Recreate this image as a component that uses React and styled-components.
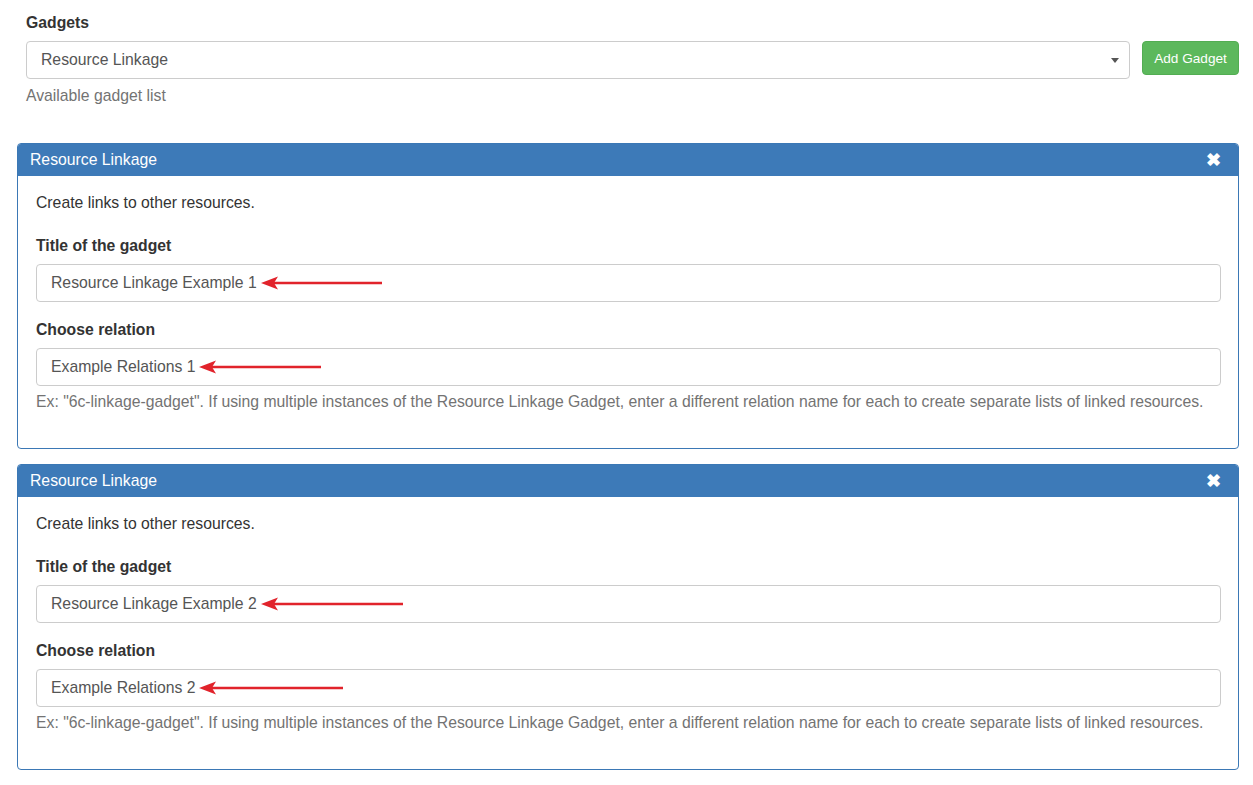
import React from 'react'
import styled, { createGlobalStyle } from 'styled-components'

const GlobalStyle = createGlobalStyle`
    body {
        margin: 0;
        background: #fff;
        font-family: 'Liberation Sans', Arial, sans-serif;
        font-size: 15.75px;
        color: #333;
    }
`;

const gadgets = [
    { title: 'Resource Linkage Example 1', titleArrow: 121, relation: 'Example Relations 1', relationArrow: 122 },
    { title: 'Resource Linkage Example 2', titleArrow: 142, relation: 'Example Relations 2', relationArrow: 144 },
];

const Arrow = ({ length }) => (
    <ArrowSvg width={length} height="14" viewBox={`0 0 ${length} 14`}>
        <line x1="12" y1="7" x2={length} y2="7" stroke="#e1232b" strokeWidth="2.6" />
        <polygon points="0,7 17,0.5 13,7 17,13.5" fill="#e1232b" />
    </ArrowSvg>
);

const App = () => {
    return (
        <Page>
            <GlobalStyle />
            <TopGroup>
                <Label>Gadgets</Label>
                <SelectRow>
                    <Select>
                        <span>Resource Linkage</span>
                        <Caret />
                    </Select>
                    <AddButton>Add Gadget</AddButton>
                </SelectRow>
                <TopHelp>Available gadget list</TopHelp>
            </TopGroup>

            {gadgets.map((g, i) => (
                <Panel key={i}>
                    <PanelHeading>
                        <span>Resource Linkage</span>
                        <Close>✖</Close>
                    </PanelHeading>
                    <PanelBody>
                        <Intro>Create links to other resources.</Intro>
                        <Label>Title of the gadget</Label>
                        <Input>
                            {g.title}
                            <Arrow length={g.titleArrow} />
                        </Input>
                        <Label>Choose relation</Label>
                        <Input>
                            {g.relation}
                            <Arrow length={g.relationArrow} />
                        </Input>
                        <Help>
                            Ex: "6c-linkage-gadget". If using multiple instances of the Resource Linkage Gadget, enter a different relation name for each to create separate lists of linked resources.
                        </Help>
                    </PanelBody>
                </Panel>
            ))}
        </Page>
    )
}

export default App


const Page = styled.div`
    padding: 13px 14px 16px 17px;
    width: 1222px;
`;

const TopGroup = styled.div`
    padding: 0 0 0 9px;
    margin-bottom: 37px;
`;

const Label = styled.div`
    font-weight: bold;
    font-size: 15.75px;
    line-height: 20px;
    margin-bottom: 8px;
    color: #333;
`;

const SelectRow = styled.div`
    display: flex;
    align-items: flex-start;
    gap: 12px;
`;

const Select = styled.div`
    flex: 1;
    height: 38px;
    box-sizing: border-box;
    border: 1px solid #ccc;
    border-radius: 4px;
    display: flex;
    align-items: center;
    justify-content: space-between;
    padding: 0 10px 0 14px;
    font-size: 15.75px;
    color: #555;
`;

const Caret = styled.span`
    width: 0;
    height: 0;
    border-left: 4px solid transparent;
    border-right: 4px solid transparent;
    border-top: 5px solid #555;
`;

const AddButton = styled.button`
    height: 34px;
    width: 97px;
    background: #5cb85c;
    border: 1px solid #52ad52;
    border-radius: 4px;
    color: #fff;
    font-family: 'Liberation Sans', Arial, sans-serif;
    font-size: 13.6px;
    padding: 0;
`;

const Help = styled.div`
    color: #737373;
    font-size: 15.75px;
    line-height: 20px;
    margin-top: 6px;
`;

const TopHelp = styled(Help)`
    margin-top: 7px;
`;

const Panel = styled.div`
    border: 1px solid #3b78b5;
    border-radius: 4px;
    margin-bottom: 15px;
    overflow: hidden;
`;

const PanelHeading = styled.div`
    background: #3d7ab8;
    color: #fff;
    height: 32px;
    display: flex;
    align-items: center;
    justify-content: space-between;
    padding: 0 17px 0 12px;
    font-size: 15.75px;
`;

const Close = styled.span`
    font-size: 18px;
    font-weight: bold;
    line-height: 1;
`;

const PanelBody = styled.div`
    padding: 17px 17px 36px 18px;
`;

const Intro = styled.div`
    font-size: 15.75px;
    line-height: 20px;
    margin-bottom: 23px;
`;

const Input = styled.div`
    height: 38px;
    box-sizing: border-box;
    border: 1px solid #ccc;
    border-radius: 4px;
    display: flex;
    align-items: center;
    padding: 0 14px;
    font-size: 15.75px;
    color: #555;
    margin-bottom: 18px;
    & + ${Help} {
        margin-top: -12px;
    }
`;

const ArrowSvg = styled.svg`
    margin-left: 4px;
    flex-shrink: 0;
`;
